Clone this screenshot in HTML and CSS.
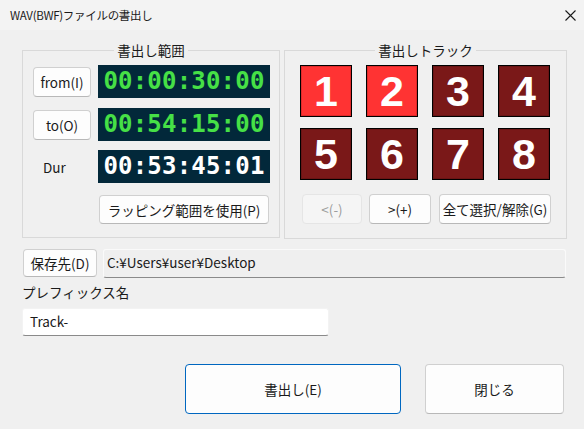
FILE: index.html
```html
<!DOCTYPE html>
<html lang="ja">
<head>
  <meta charset="UTF-8" />
  <meta name="viewport" content="width=device-width, initial-scale=1" />
  <title>WAV(BWF)ファイルの書出し</title>
  <link rel="stylesheet" href="styles.css">
</head>
<body>
  <div class="titlebar">
    <div class="title">WAV(BWF)ファイルの書出し</div>
    <div class="close">
      <svg width="11" height="11" viewBox="0 0 11 11"><path d="M0.5 0.5 L10.5 10.5 M10.5 0.5 L0.5 10.5" stroke="#1a1a1a" stroke-width="1.1" fill="none"/></svg>
    </div>
  </div>

  <div class="main">
    <div class="groups">
      <!-- 書出し範囲 -->
      <div class="group range">
        <div class="group-title">書出し範囲</div>
        <div class="range-row">
          <button class="btn side">from(I)</button>
          <div class="tc green">00:00:30:00</div>
        </div>
        <div class="range-row r2">
          <button class="btn side">to(O)</button>
          <div class="tc green">00:54:15:00</div>
        </div>
        <div class="range-row r3">
          <div class="side dur">Dur</div>
          <div class="tc white">00:53:45:01</div>
        </div>
        <div class="range-row r4">
          <button class="btn wrap">ラッピング範囲を使用(P)</button>
        </div>
      </div>

      <!-- 書出しトラック -->
      <div class="group tracks">
        <div class="group-title">書出しトラック</div>
        <div class="track-grid">
          <div class="track on">1</div>
          <div class="track on">2</div>
          <div class="track">3</div>
          <div class="track">4</div>
          <div class="track">5</div>
          <div class="track">6</div>
          <div class="track">7</div>
          <div class="track">8</div>
        </div>
        <div class="track-btns">
          <button class="btn prev" disabled>&lt;(-)</button>
          <button class="btn next">&gt;(+)</button>
          <button class="btn all">全て選択/解除(G)</button>
        </div>
      </div>
    </div>

    <div class="path-row">
      <button class="btn save">保存先(D)</button>
      <div class="path">C:¥Users¥user¥Desktop</div>
    </div>

    <div class="prefix-label">プレフィックス名</div>
    <div class="prefix">Track-</div>

    <div class="actions">
      <button class="btn big primary">書出し(E)</button>
      <button class="btn big">閉じる</button>
    </div>
  </div>
</body>
</html>
```

FILE: styles.css
```css
body {
  margin: 0;
  width: 584px;
  height: 429px;
  overflow: hidden;
  background: #f0f0f0;
  color: #1a1a1a;
  font-family: "Noto Sans CJK JP", "Noto Sans", sans-serif;
  font-size: 13.5px;
}
.titlebar {
  height: 30px;
  background: #f3f3f3;
  display: flex;
  align-items: center;
  justify-content: space-between;
}
.title {
  padding-left: 10px;
  font-size: 11.5px;
  letter-spacing: -0.3px;
}
.close {
  padding-right: 8px;
  padding-top: 1px;
}
.close svg { display: block; }

.main {
  padding: 20px 0 0 22px;
}
.groups {
  display: flex;
  gap: 4px;
}
.group {
  position: relative;
  border: 1px solid #d9d9d9;
  box-sizing: border-box;
}
.group-title {
  position: absolute;
  top: -10px;
  left: 0;
  right: 0;
  margin: 0 auto;
  width: max-content;
  padding: 0 3px;
  background: #f0f0f0;
  font-size: 13.5px;
  line-height: 18px;
}
.range {
  width: 258px;
  height: 188px;
  padding: 14px 0 0 10px;
}
.tracks {
  width: 283px;
  height: 189px;
  padding: 14px 0 0 15px;
}

.btn {
  font-family: "Noto Sans CJK JP", "Noto Sans", sans-serif;
  font-size: 13.5px;
  color: #1a1a1a;
  background: #fdfdfd;
  border: 1px solid #d0d0d0;
  border-bottom-color: #b8b8b8;
  border-radius: 4px;
  padding: 0;
  margin: 0;
  box-sizing: border-box;
}
.btn:disabled {
  background: #f5f5f5;
  border-color: #e5e5e5;
  color: #9d9d9d;
}

.range-row {
  display: flex;
  align-items: center;
  gap: 7px;
}
.r2 { margin-top: 10px; }
.r3 { margin-top: 9px; }
.r4 { margin-top: 12px; padding-left: 66px; }
.side {
  width: 58px;
  height: 30px;
  flex: none;
}
.dur {
  box-sizing: border-box;
  padding-left: 10px;
  line-height: 30px;
}
.tc {
  width: 172px;
  height: 33px;
  background: #02283a;
  font-family: "DejaVu Sans Mono", monospace;
  font-weight: bold;
  font-size: 24px;
  line-height: 33px;
  text-align: center;
  letter-spacing: 0.2px;
}
.green { color: #46e046; }
.white { color: #ffffff; }
.wrap {
  width: 170px;
  height: 29px;
}

.track-grid {
  display: grid;
  grid-template-columns: repeat(4, 52px);
  grid-auto-rows: 52px;
  column-gap: 14px;
  row-gap: 11px;
}
.track {
  box-sizing: border-box;
  border: 1px solid #000;
  background: #7a1818;
  box-shadow: inset 0 0 0 1px #6a1414;
  color: #fff;
  font-family: "Liberation Sans", Arial, sans-serif;
  font-weight: bold;
  font-size: 43px;
  line-height: 50px;
  text-align: center;
}
.track.on {
  background: #ff3333;
  box-shadow: inset 0 0 0 1px #e02a2a;
}
.track-btns {
  display: flex;
  margin: 14px 0 0 2px;
}
.track-btns .btn { height: 30px; }
.prev { width: 60px; }
.next { width: 62px; margin-left: 7px; }
.all { width: 112px; margin-left: 8px; }

.path-row {
  display: flex;
  align-items: center;
  margin-top: 9px;
  height: 30px;
}
.save {
  width: 74px;
  height: 28px;
  margin-left: 1px;
}
.path {
  width: 463px;
  height: 29px;
  margin-left: 6px;
  box-sizing: border-box;
  background: #efefef;
  border: 1px solid #fafafa;
  border-bottom: 1px solid #8a8a8a;
  border-radius: 3px;
  padding-left: 3px;
  line-height: 24px;
}
.prefix-label {
  margin-top: 4px;
  line-height: 20px;
}
.prefix {
  width: 307px;
  height: 28px;
  margin-top: 6px;
  box-sizing: border-box;
  background: #fff;
  border: 1px solid #f3f3f3;
  border-bottom: 1px solid #8a8a8a;
  border-radius: 3px;
  padding-left: 7px;
  line-height: 25px;
}
.actions {
  display: flex;
  margin: 28px 0 0 163px;
  gap: 24px;
}
.big {
  height: 50px;
  width: 139px;
}
.primary {
  width: 216px;
  border: 1px solid #0067c0;
}
```
